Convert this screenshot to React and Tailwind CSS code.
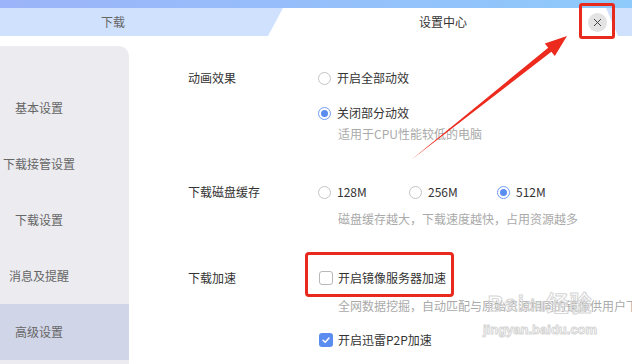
import React from "react";

const font = { fontFamily: '"Noto Sans CJK SC", "Noto Sans", sans-serif' };

function Radio({ checked }) {
  return checked ? (
    <span className="w-[13px] h-[13px] rounded-full border border-[#6f9bf3] flex items-center justify-center shrink-0 bg-white">
      <span className="w-[7px] h-[7px] rounded-full bg-[#5b8cf0]" />
    </span>
  ) : (
    <span className="w-[13px] h-[13px] rounded-full border border-[#c4c4c4] shrink-0 bg-white" />
  );
}

function Check({ checked }) {
  return checked ? (
    <span className="w-[14px] h-[14px] rounded-[3px] bg-[#5b8cf0] flex items-center justify-center shrink-0">
      <svg width="10" height="10" viewBox="0 0 10 10">
        <path d="M2 5.2 L4.2 7.2 L8 3" stroke="white" strokeWidth="1.5" fill="none" strokeLinecap="round" strokeLinejoin="round" />
      </svg>
    </span>
  ) : (
    <span className="w-[14px] h-[14px] rounded-[3px] border border-[#b8b8b8] bg-white shrink-0" />
  );
}

export default function App() {
  const side = ["基本设置", "下载接管设置", "下载设置", "消息及提醒", "高级设置"];
  return (
    <div className="relative w-[632px] h-[364px] overflow-hidden bg-white text-[12px] text-[#333]" style={font}>
      <div className="h-2 bg-gradient-to-r from-[#9cb4f9] to-[#8ecafb]" />
      <div className="flex h-7 bg-[#cfe1fd]">
        <div className="w-[268px] pl-[10px] flex items-center justify-center text-[#666]">
          <span className="mr-[52px]">下载</span>
        </div>
        <div className="relative w-[350px] bg-white flex items-center justify-center [clip-path:polygon(15px_0,338px_0,350px_100%,0_100%)]">
          <span className="text-[#333]">设置中心</span>
          <div className="absolute right-[11px] top-[5px] w-[19px] h-[19px] rounded-full bg-[#e3e3e3] flex items-center justify-center">
            <svg width="9" height="9" viewBox="0 0 9 9">
              <path d="M1 1 L8 8 M8 1 L1 8" stroke="#444" strokeWidth="1" />
            </svg>
          </div>
        </div>
        <div className="flex-1" />
      </div>
      <div className="flex h-[328px]">
        <div className="w-[129px] mt-[10px] rounded-tr-[10px] bg-[#ebebf0] pt-[34px] flex flex-col text-[#666]">
          {side.map((s, i) => (
            <div key={s} className={`h-14 flex items-center ${i === 4 ? "bg-[#d0d5e7]" : ""}`}>
              <span className="w-[78px] text-center whitespace-nowrap">{s}</span>
            </div>
          ))}
        </div>
        <div className="flex-1 pl-[59px] pt-8 overflow-hidden">
          <div className="flex">
            <div className="w-[130px] leading-5">动画效果</div>
            <div className="flex flex-col">
              <div className="flex items-center gap-[6px] h-5"><Radio /><span>开启全部动效</span></div>
              <div className="flex items-center gap-[6px] h-5 mt-[15px]"><Radio checked /><span>关闭部分动效</span></div>
              <div className="pl-[20px] h-5 leading-5 mt-px text-[#aaa]">适用于CPU性能较低的电脑</div>
            </div>
          </div>
          <div className="flex mt-[38px]">
            <div className="w-[130px] leading-5">下载磁盘缓存</div>
            <div className="flex flex-col">
              <div className="flex h-5">
                <div className="w-[91px] flex items-center gap-[6px]"><Radio /><span>128M</span></div>
                <div className="w-[88px] flex items-center gap-[6px]"><Radio /><span>256M</span></div>
                <div className="flex items-center gap-[6px]"><Radio checked /><span>512M</span></div>
              </div>
              <div className="pl-[20px] h-5 leading-5 mt-[7px] text-[#aaa] whitespace-nowrap">磁盘缓存越大，下载速度越快，占用资源越多</div>
            </div>
          </div>
          <div className="flex mt-[39px]">
            <div className="w-[130px] leading-5 shrink-0">下载加速</div>
            <div className="flex flex-col">
              <div className="flex items-center gap-[5px] h-5 pl-px"><Check /><span>开启镜像服务器加速</span></div>
              <div className="pl-[20px] h-5 leading-5 mt-2 text-[#aaa] whitespace-nowrap">全网数据挖掘，自动匹配与原始资源相同的镜像供用户下载</div>
              <div className="flex items-center gap-[5px] h-5 pl-px mt-[14px]"><Check checked /><span>开启迅雷P2P加速</span></div>
            </div>
          </div>
        </div>
      </div>

      {/* watermark */}
      <div
        className="absolute left-[483px] top-[292px] flex flex-col items-center text-transparent pointer-events-none [-webkit-text-stroke:1px_#d6d6d6]"
        style={{ fontFamily: '"Liberation Sans", "Noto Sans CJK SC", sans-serif' }}
      >
        <span className="text-[22px] leading-[24px] font-bold tracking-[1px]">Bai<span className="text-[16px]">du</span>经验</span>
        <span className="text-[13px] leading-[16px] font-bold mt-[4px]">jingyan.baidu.com</span>
      </div>

      {/* annotations */}
      <div className="absolute left-[579px] top-[3px] w-[36px] h-[36px] border-[3px] border-[#e82a1e] rounded-[3px]" />
      <div className="absolute left-[305px] top-[252px] w-[149px] h-[45px] border-[3px] border-[#e82a1e] rounded-[4px]" />
      <svg className="absolute left-0 top-0 pointer-events-none" width="632" height="364">
        <polygon points="411,160 548.2,47.7 544.8,43.4 567,36 554.8,56 551.4,51.7" fill="#ec2a1d" />
      </svg>
    </div>
  );
}
